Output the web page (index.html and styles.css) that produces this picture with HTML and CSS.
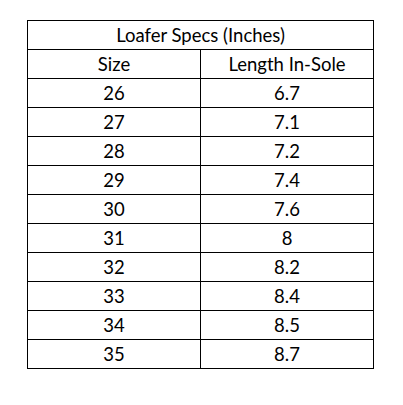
FILE: index.html
```html
<!DOCTYPE html>
<html>
<head>
<meta charset="utf-8">
<link rel="stylesheet" href="styles.css">
</head>
<body>
<table class="specs">
  <tr><td class="title" colspan="2">Loafer Specs (Inches)</td></tr>
  <tr><td>Size</td><td>Length In-Sole</td></tr>
  <tr><td>26</td><td>6.7</td></tr>
  <tr><td>27</td><td>7.1</td></tr>
  <tr><td>28</td><td>7.2</td></tr>
  <tr><td>29</td><td>7.4</td></tr>
  <tr><td>30</td><td>7.6</td></tr>
  <tr><td>31</td><td>8</td></tr>
  <tr><td>32</td><td>8.2</td></tr>
  <tr><td>33</td><td>8.4</td></tr>
  <tr><td>34</td><td>8.5</td></tr>
  <tr><td>35</td><td>8.7</td></tr>
</table>
</body>
</html>
```
FILE: styles.css
```css
html, body {
  margin: 0;
  padding: 0;
  background: #ffffff;
}
body {
  padding: 20px 0 0 27px;
}
.specs {
  border-collapse: collapse;
  table-layout: fixed;
  width: 347px;
  font-family: Lato, "Open Sans", sans-serif;
  font-size: 18.5px;
  color: #000000;
}
.specs td {
  border: 1px solid #000000;
  height: 27px;
  padding: 1px 0 0 0;
  text-align: center;
  vertical-align: middle;
  width: 50%;
  line-height: 27px;
}
```
